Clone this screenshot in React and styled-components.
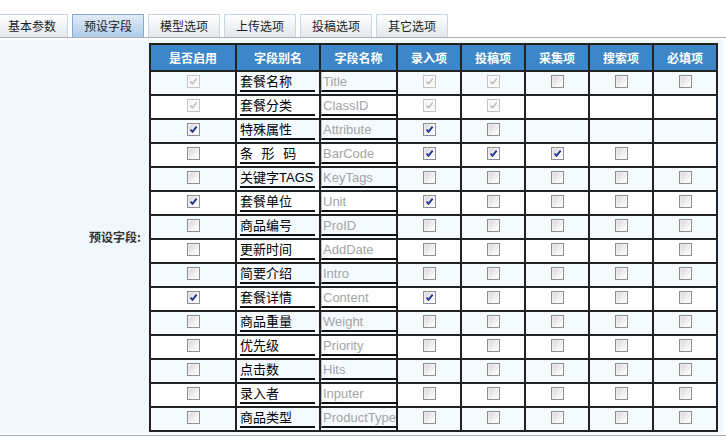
import React from 'react';
import styled, { createGlobalStyle } from 'styled-components';

const TABS = ['基本参数', '预设字段', '模型选项', '上传选项', '投稿选项', '其它选项'];

const COLUMNS = [
  { title: '是否启用', width: 86 },
  { title: '字段别名', width: 84 },
  { title: '字段名称', width: 77 },
  { title: '录入项', width: 64 },
  { title: '投稿项', width: 64 },
  { title: '采集项', width: 64 },
  { title: '搜索项', width: 64 },
  { title: '必填项', width: 64 },
];

// d = disabled checked, c = checked, u = unchecked, '-' = no box
const ALL_OFF = ['u', 'u', 'u', 'u', 'u', 'u'];

const FIELDS = [
  { alias: '套餐名称', name: 'Title', boxes: ['d', 'd', 'd', 'u', 'u', 'u'] },
  { alias: '套餐分类', name: 'ClassID', boxes: ['d', 'd', 'd', '-', '-', '-'] },
  { alias: '特殊属性', name: 'Attribute', boxes: ['c', 'c', 'u', '-', '-', '-'] },
  { alias: '条 形 码', name: 'BarCode', boxes: ['u', 'c', 'c', 'c', 'u', '-'] },
  { alias: '关键字TAGS', name: 'KeyTags', boxes: ALL_OFF },
  { alias: '套餐单位', name: 'Unit', boxes: ['c', 'c', 'u', 'u', 'u', 'u'] },
  { alias: '商品编号', name: 'ProID', boxes: ALL_OFF },
  { alias: '更新时间', name: 'AddDate', boxes: ALL_OFF },
  { alias: '简要介绍', name: 'Intro', boxes: ALL_OFF },
  { alias: '套餐详情', name: 'Content', boxes: ['c', 'c', 'u', 'u', 'u', 'u'] },
  { alias: '商品重量', name: 'Weight', boxes: ALL_OFF },
  { alias: '优先级', name: 'Priority', boxes: ALL_OFF },
  { alias: '点击数', name: 'Hits', boxes: ALL_OFF },
  { alias: '录入者', name: 'Inputer', boxes: ALL_OFF },
  { alias: '商品类型', name: 'ProductType', boxes: ALL_OFF },
];

const Check = ({ state }) => {
  if (state === '-') return null;
  return (
    <Box $disabled={state === 'd'}>
      {state !== 'u' && (
        <svg width="9" height="9" viewBox="0 0 9 9">
          <path
            d="M1.5 4.5 L3.5 6.8 L7.6 1.6"
            fill="none"
            stroke={state === 'd' ? '#b8b8b8' : '#21349a'}
            strokeWidth={state === 'd' ? 1.3 : 1.9}
          />
        </svg>
      )}
    </Box>
  );
};

const App = () => {
  return (
    <>
      <GlobalStyle />
      <Wrapper>
        <TabBar>
          {TABS.map((tab) => (
            <Tab key={tab} $active={tab === '预设字段'}>
              {tab}
            </Tab>
          ))}
        </TabBar>
        <Panel>
          <Label>预设字段:</Label>
          <TableBox>
            <FieldTable>
              <colgroup>
                {COLUMNS.map((col) => (
                  <col key={col.title} style={{ width: col.width }} />
                ))}
              </colgroup>
              <thead>
                <tr>
                  {COLUMNS.map((col) => (
                    <HeadCell key={col.title}>{col.title}</HeadCell>
                  ))}
                </tr>
              </thead>
              <tbody>
                {FIELDS.map((field, i) => (
                  <Row key={field.name} $odd={i % 2 === 0}>
                    <Cell>
                      <Check state={field.boxes[0]} />
                    </Cell>
                    <TextCell>
                      <AliasInput>{field.alias}</AliasInput>
                    </TextCell>
                    <TextCell>
                      <NameInput>{field.name}</NameInput>
                    </TextCell>
                    {field.boxes.slice(1).map((state, j) => (
                      <Cell key={j}>
                        <Check state={state} />
                      </Cell>
                    ))}
                  </Row>
                ))}
              </tbody>
            </FieldTable>
          </TableBox>
        </Panel>
        <BottomLine />
      </Wrapper>
    </>
  );
};

const GlobalStyle = createGlobalStyle`
  body {
    margin: 0;
    background: #fff;
    font-family: "Liberation Sans", "Noto Sans CJK SC", sans-serif;
    font-size: 12px;
    color: #222;
  }
`;

const Wrapper = styled.div`
  width: 726px;
  overflow: hidden;
`;

const TabBar = styled.div`
  display: flex;
  gap: 4px;
  margin-left: -4px;
  padding-top: 14px;
  border-bottom: 1px solid #a7b1bb;
`;

const Tab = styled.div`
  width: 72px;
  height: 23px;
  box-sizing: border-box;
  border: 1px solid ${(p) => (p.$active ? '#82a9d4' : '#c9d5e1')};
  border-bottom: none;
  background: ${(p) =>
    p.$active ? 'linear-gradient(#e1ecf8, #aecbea)' : 'linear-gradient(#ffffff, #e2e8ed)'};
  font-family: "Noto Sans CJK SC", sans-serif;
  font-size: 12px;
  line-height: 22px;
  text-align: center;
  color: #222;
`;

const Panel = styled.div`
  display: flex;
  margin-top: 2px;
  margin-right: 3px;
  background: #f0f7fd;
`;

const Label = styled.div`
  width: 141px;
  padding-right: 8px;
  display: flex;
  align-items: center;
  justify-content: flex-end;
  font-family: "Noto Sans CJK SC", sans-serif;
  font-weight: bold;
  font-size: 12px;
  color: #333;
`;

const TableBox = styled.div`
  padding: 3px 0 1px;
`;

const FieldTable = styled.table`
  table-layout: fixed;
  width: 569px;
  border-collapse: separate;
  border-spacing: 0;
  border-left: 2px solid #222;
  border-top: 2px solid #222;

  td,
  th {
    box-sizing: border-box;
    border-right: 2px solid #222;
    border-bottom: 2px solid #222;
    padding: 0;
  }
`;

const HeadCell = styled.th`
  height: 27px;
  background: #3d87c8;
  color: #fff;
  font-family: "Noto Sans CJK SC", sans-serif;
  font-weight: bold;
  font-size: 12px;
  text-align: center;
  vertical-align: middle;
`;

const Row = styled.tr`
  background: ${(p) => (p.$odd ? '#f5faff' : '#ffffff')};
`;

const Cell = styled.td`
  height: 24px;
  text-align: center;
  vertical-align: top;
  padding-top: 3px !important;
`;

const TextCell = styled.td`
  height: 24px;
  vertical-align: top;
`;

const Box = styled.span`
  display: inline-flex;
  align-items: center;
  justify-content: center;
  width: 13px;
  height: 13px;
  box-sizing: border-box;
  border: 1px solid ${(p) => (p.$disabled ? '#c4c4c4' : '#8e8e8e')};
  background: ${(p) => (p.$disabled ? '#f6f6f6' : 'linear-gradient(135deg, #d4d4d4, #f2f2f2 60%, #ffffff)')};
  box-shadow: inset 0 0 0 1px ${(p) => (p.$disabled ? '#fbfbfb' : 'rgba(255,255,255,0.5)')};
`;

const AliasInput = styled.div`
  width: 75px;
  height: 18px;
  margin: 0 0 0 3px;
  border-bottom: 2px solid #111;
  font-family: "Liberation Sans", "Noto Sans CJK SC", sans-serif;
  font-size: 13px;
  line-height: 19px;
  color: #000;
  white-space: pre;
  word-spacing: 5px;
  overflow: hidden;
`;

const NameInput = styled.div`
  width: 75px;
  height: 18px;
  padding-left: 1px;
  border-left: 1px solid #c0c0c0;
  border-bottom: 2px solid #111;
  font-family: "Liberation Sans", sans-serif;
  font-size: 13px;
  line-height: 19px;
  color: #a4a4a4;
  white-space: nowrap;
  overflow: hidden;
`;

const BottomLine = styled.div`
  margin-top: 2px;
  border-top: 1px solid #a7b1bb;
`;

export default App;
